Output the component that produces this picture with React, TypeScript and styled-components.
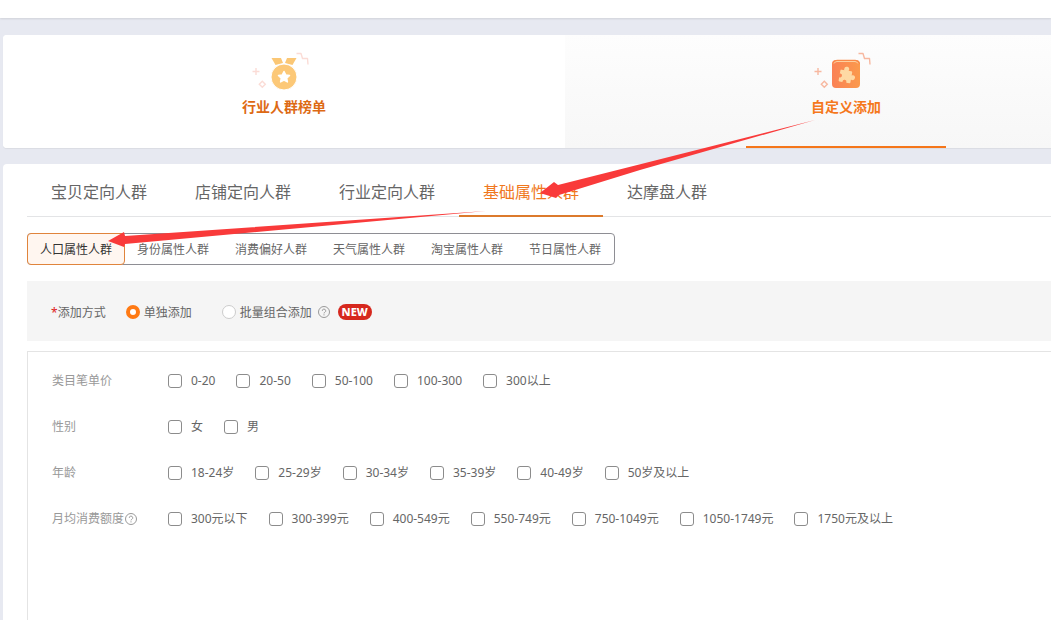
import React from "react";
import styled, { createGlobalStyle } from "styled-components";

const GlobalStyle = createGlobalStyle`
  * { box-sizing: border-box; }
  body {
    margin: 0;
    background: #e7e9f1;
    font-family: "Noto Sans", "Noto Sans CJK SC", sans-serif;
    font-size: 12px;
    line-height: 20px;
    color: #666;
    overflow-x: hidden;
  }
  button { font: inherit; color: inherit; border: 0; margin: 0; cursor: pointer; }
`;

const Page = styled.main`
  position: relative;
  min-height: 100vh;
  display: flex;
  flex-direction: column;
  overflow: hidden;
`;

const TopStrip = styled.div`
  height: 18px;
  background: #fff;
  box-shadow: 0 1px 2px rgba(0, 0, 0, 0.1);
`;

const ModeCard = styled.div`
  display: flex;
  margin: 17px -76px 0 3px;
  height: 113px;
  background: #fff;
  border-radius: 4px;
  overflow: hidden;
  box-shadow: 0 1px 1px rgba(0, 0, 0, 0.06);
`;

const ModeButton = styled.button<{ $active?: boolean }>`
  flex: 1;
  display: flex;
  flex-direction: column;
  align-items: center;
  padding: 15px 0 0;
  background: ${(p) => (p.$active ? "linear-gradient(#fdfdfd, #f7f7f7)" : "#fff")};
`;

const ModeLabel = styled.span<{ $active?: boolean }>`
  font-size: 14px;
  line-height: 20px;
  font-weight: 700;
  color: ${(p) => (p.$active ? "#f5781c" : "#dd6a14")};
`;

const ModeLine = styled.span`
  width: 200px;
  height: 2px;
  margin-top: auto;
  background: #f5761a;
`;

const ModeIcon = styled.svg`
  width: 60px;
  height: 47px;
  flex: none;
  overflow: visible;
`;

const Panel = styled.section`
  flex: 1;
  display: flex;
  flex-direction: column;
  margin: 16px 0 0 3px;
  padding-left: 24px;
  background: #fff;
  border-radius: 4px 0 0 0;
`;

const Tabs = styled.nav`
  display: flex;
  height: 53px;
  border-bottom: 1px solid #e3e4e6;
`;

const Tab = styled.button<{ $active?: boolean }>`
  height: 53px;
  padding: 4px 24px 0;
  background: none;
  font-size: 16px;
  line-height: 24px;
  color: ${(p) => (p.$active ? "#f0781e" : "#666")};
  border-bottom: 2px solid ${(p) => (p.$active ? "#dc7a2c" : "transparent")};
`;

const SubTabs = styled.div`
  display: flex;
  align-self: flex-start;
  margin-top: 16px;
  height: 32px;
  border: 1px solid #8e8e94;
  border-radius: 4px;
`;

const SubTab = styled.button<{ $active?: boolean }>`
  width: 98px;
  padding: 2px 0 0;
  background: none;
  ${(p) =>
    p.$active &&
    `
    margin: -1px;
    background: #fff6f0;
    border: 1px solid #e0843c;
    border-radius: 4px;
    color: #333;
  `}
`;

const MethodBar = styled.div`
  display: flex;
  align-items: center;
  height: 60px;
  margin: 16px 0 0;
  padding: 2px 24px 0;
  background: #f5f5f5;
`;

const MethodTitle = styled.span`
  margin-right: 20px;
`;

const Required = styled.span`
  color: #e02020;
`;

const RadioLabel = styled.label`
  display: flex;
  align-items: center;
  gap: 4px;
  margin-right: 30px;
  &:last-of-type { margin-right: 6px; }
`;

const Radio = styled.input`
  appearance: none;
  width: 14px;
  height: 14px;
  margin: 0;
  border: 1px solid #ccc;
  border-radius: 50%;
  background: #fff;
  &:checked { border: 4px solid #ff7a14; }
`;

const LabelText = styled.span`
  padding-top: 2px;
`;

const NewBadge = styled.span`
  margin-left: 8px;
  width: 34px;
  height: 16px;
  border-radius: 8px;
  background: #d6281e;
  color: #fff;
  font-size: 11px;
  line-height: 16px;
  font-weight: 800;
  text-align: center;
`;

const Form = styled.form`
  flex: 1;
  display: flex;
  flex-direction: column;
  gap: 26px;
  margin-top: 10px;
  padding: 19px 0 24px 24px;
  border: 1px solid #e4e4e4;
  border-width: 1px 0 0 1px;
`;

const Row = styled.div`
  display: flex;
  align-items: center;
  height: 20px;
`;

const RowTitle = styled.span`
  display: flex;
  align-items: center;
  gap: 1px;
  width: 116px;
  color: #999;
`;

const Options = styled.div`
  display: flex;
  gap: 21px;
`;

const Option = styled.label`
  display: flex;
  align-items: center;
  gap: 9px;
  white-space: nowrap;
`;

const Checkbox = styled.input`
  appearance: none;
  width: 14px;
  height: 14px;
  margin: 0;
  border: 1px solid #8c8c8c;
  border-radius: 3px;
  background: #fff;
  &:checked { background: #ff7a14; border-color: #ff7a14; }
`;

const HelpSvg = styled.svg`
  width: 12px;
  height: 12px;
  flex: none;
`;

const Arrows = styled.svg`
  position: absolute;
  left: 0;
  top: 0;
  width: 1051px;
  height: 620px;
  pointer-events: none;
`;

const Help = () => (
  <HelpSvg viewBox="0 0 12 12" fill="none" stroke="#999">
    <circle cx="6" cy="6" r="5.5" />
    <path d="M4.3 4.8a1.7 1.7 0 1 1 2.5 1.5c-.6.3-.8.6-.8 1.1" />
    <path d="M6 8.300v1.100" />
  </HelpSvg>
);

const Sparkles = ({ color }: { color: string }) => (
  <g fill="none" stroke={color} strokeWidth="1.4">
    <path d="M-1.500 21.500h7M2 18v7" />
    <path d="M8.300 31.300l3 3-3 3-3-3z" />
    <path d="M42.500 3.500h4.500l1.500 5h5l.5 6" strokeLinejoin="round" />
  </g>
);

const MedalIcon = () => (
  <ModeIcon viewBox="0 0 60 47">
    <Sparkles color="#fbdcd6" />
    <path d="M17.500 8h9.500l2 5-7.500 2z" fill="#fbc775" />
    <path d="M42.500 8h-9.500l-2 5 7.500 2z" fill="#fbc775" />
    <circle cx="30" cy="27" r="13" fill="#fcc877" stroke="#fff" strokeWidth="1" />
    <path d="M30 21.500l1.700 3.400 3.800.5-2.800 2.700.7 3.800-3.400-1.800-3.400 1.800.7-3.800-2.800-2.700 3.800-.5z" fill="#fff" stroke="#fff" strokeWidth="1.500" strokeLinejoin="round" />
  </ModeIcon>
);

const PuzzleIcon = () => (
  <ModeIcon viewBox="0 0 60 47">
    <defs>
      <linearGradient id="tile" x1="0" y1="0" x2="1" y2="0">
        <stop offset="0" stopColor="#fa8155" />
        <stop offset="1" stopColor="#fb9a4c" />
      </linearGradient>
    </defs>
    <Sparkles color="#f7b8a0" />
    <rect x="16" y="10" width="28" height="28" rx="4" fill="url(#tile)" />
    <path d="M17 14q1-3.500 4.500-3.500h17.500q3 0 4.500 3.500" fill="none" stroke="#f98a4a" strokeWidth="1.500" />
    <path d="M18 13.500q1-2 3-2h18q2 0 3 2" fill="none" stroke="#fdd0a0" />
    <g transform="rotate(10 30 26)">
      <rect x="23.500" y="20.500" width="12" height="12" rx="1" fill="#fed9a4" />
      <circle cx="29.500" cy="19.300" r="2.500" fill="#fed9a4" />
      <circle cx="36.700" cy="26.500" r="2.500" fill="#fed9a4" />
      <circle cx="24" cy="26.500" r="2" fill="#fa8855" />
      <circle cx="29.500" cy="32" r="2" fill="#fa8d51" />
    </g>
  </ModeIcon>
);

const tabs = ["宝贝定向人群", "店铺定向人群", "行业定向人群", "基础属性人群", "达摩盘人群"];
const subTabs = ["人口属性人群", "身份属性人群", "消费偏好人群", "天气属性人群", "淘宝属性人群", "节日属性人群"];
const rows = [
  { title: "类目笔单价", options: ["0-20", "20-50", "50-100", "100-300", "300以上"] },
  { title: "性别", options: ["女", "男"] },
  { title: "年龄", options: ["18-24岁", "25-29岁", "30-34岁", "35-39岁", "40-49岁", "50岁及以上"] },
  {
    title: "月均消费额度",
    help: true,
    options: ["300元以下", "300-399元", "400-549元", "550-749元", "750-1049元", "1050-1749元", "1750元及以上"],
  },
];

export default function App() {
  return (
    <>
      <GlobalStyle />
      <Page>
        <TopStrip />
        <ModeCard>
          <ModeButton type="button">
            <MedalIcon />
            <ModeLabel>行业人群榜单</ModeLabel>
          </ModeButton>
          <ModeButton type="button" $active>
            <PuzzleIcon />
            <ModeLabel $active>自定义添加</ModeLabel>
            <ModeLine />
          </ModeButton>
        </ModeCard>
        <Panel>
          <Tabs>
            {tabs.map((t, i) => (
              <Tab key={t} type="button" $active={i === 3}>{t}</Tab>
            ))}
          </Tabs>
          <SubTabs>
            {subTabs.map((t, i) => (
              <SubTab key={t} type="button" $active={i === 0}>{t}</SubTab>
            ))}
          </SubTabs>
          <MethodBar role="radiogroup" aria-label="添加方式">
            <MethodTitle as={LabelText}><Required>*</Required>添加方式</MethodTitle>
            <RadioLabel><Radio type="radio" name="method" defaultChecked /><LabelText>单独添加</LabelText></RadioLabel>
            <RadioLabel><Radio type="radio" name="method" /><LabelText>批量组合添加</LabelText></RadioLabel>
            <Help />
            <NewBadge>NEW</NewBadge>
          </MethodBar>
          <Form>
            {rows.map((r) => (
              <Row key={r.title} role="group" aria-label={r.title}>
                <RowTitle>{r.title}{r.help && <Help />}</RowTitle>
                <Options>
                  {r.options.map((o) => (
                    <Option key={o}><Checkbox type="checkbox" />{o}</Option>
                  ))}
                </Options>
              </Row>
            ))}
          </Form>
        </Panel>
        <Arrows viewBox="0 0 1051 620" fill="#f93a3a">
          <path d="M815 120L558 185 554 182 540 193 556 198 559 195 640 170z" />
          <path d="M486 211L125 236 124 232 108 241 124 247 125 244z" />
        </Arrows>
      </Page>
    </>
  );
}
